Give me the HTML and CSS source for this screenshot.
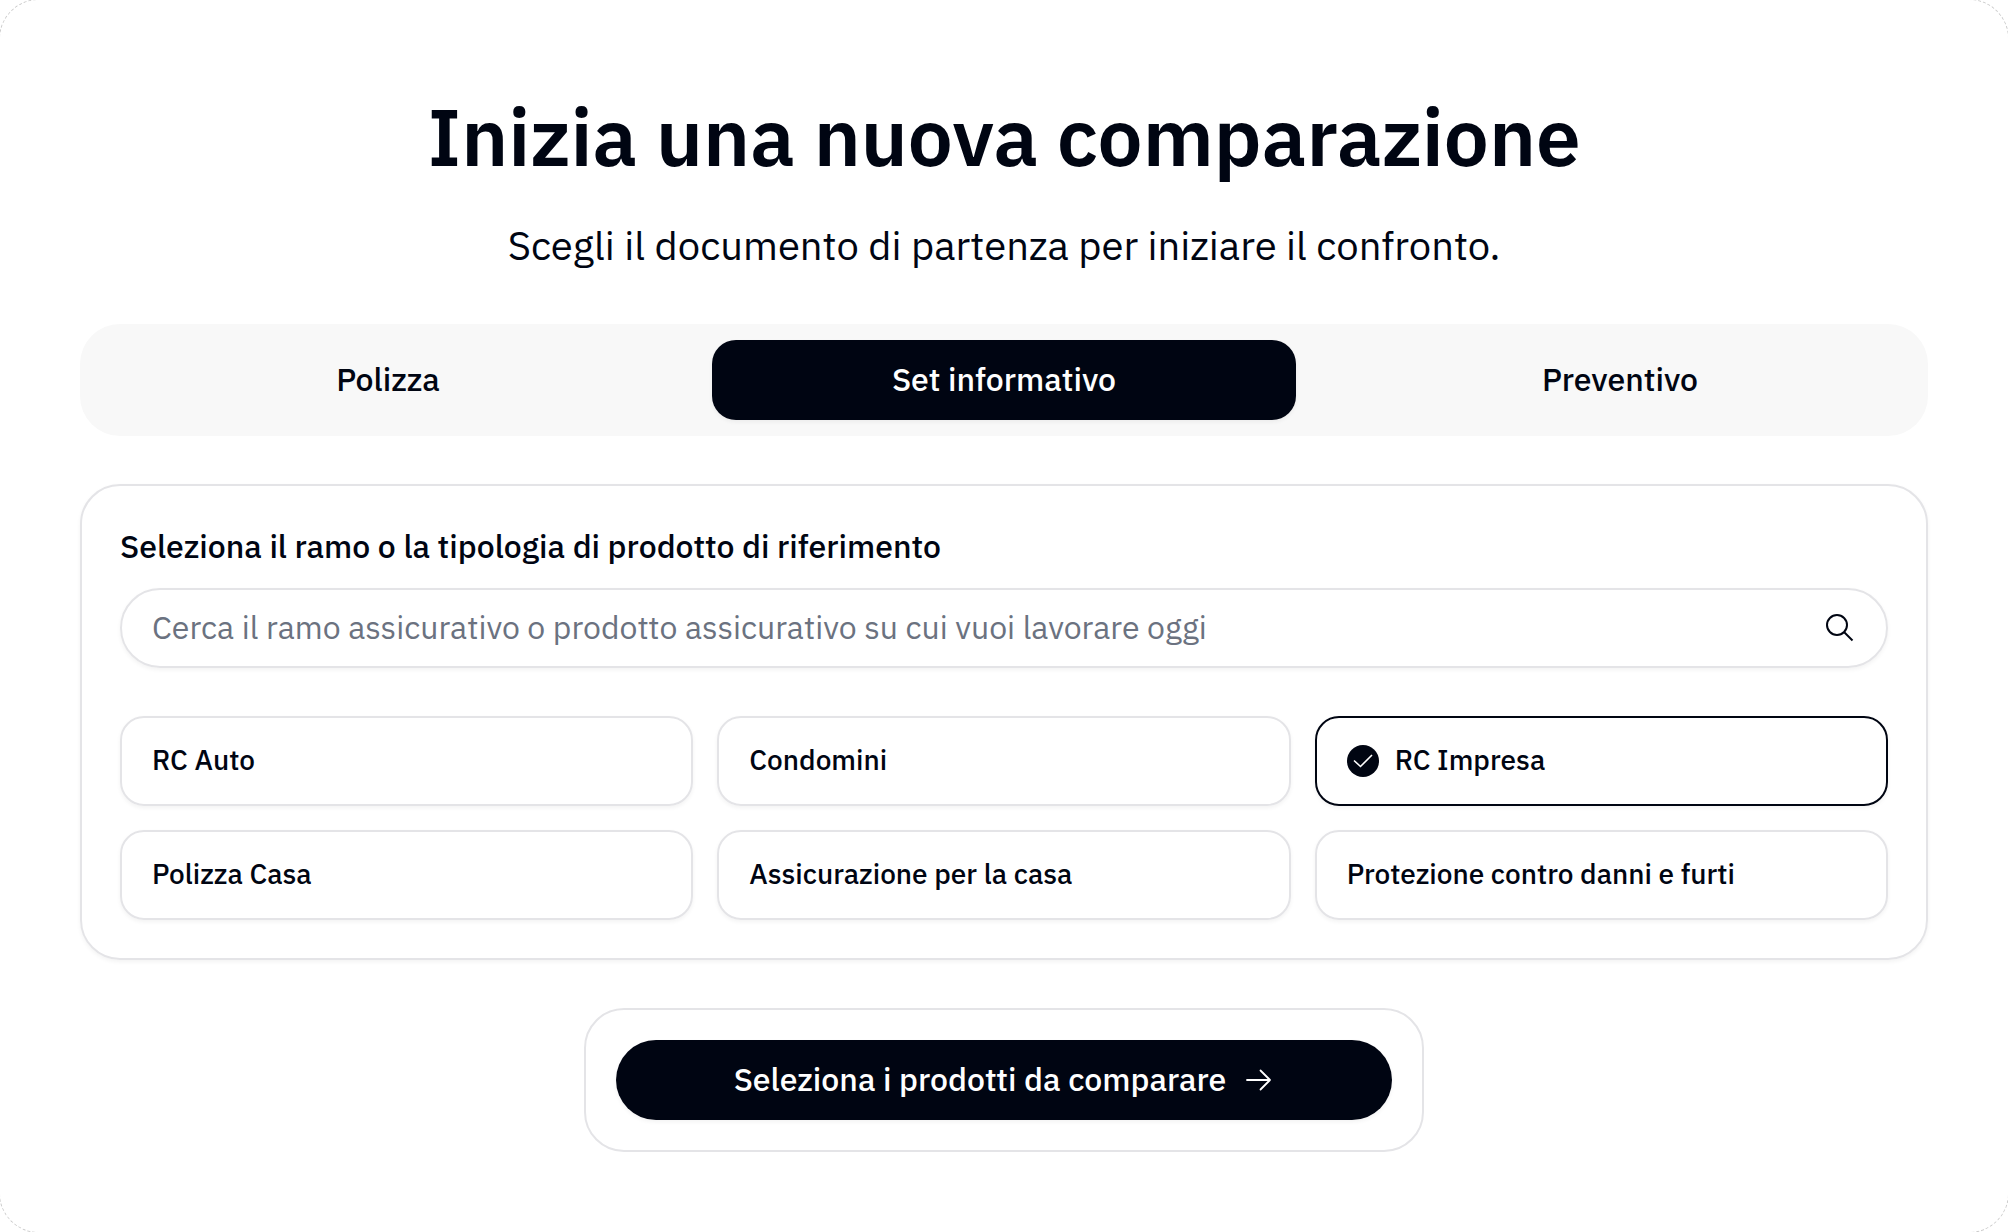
FILE: index.html
```
<!DOCTYPE html>
<html lang="it">
<head>
    <meta charset="utf-8">
    <meta name="viewport" content="width=device-width, initial-scale=1">
    <title>Inizia una nuova comparazione</title>
    <link rel="stylesheet" href="styles.css">
</head>
<body>
    <main class="page">
        <h1>Inizia una nuova comparazione</h1>
        <p class="subtitle">Scegli il documento di partenza per iniziare il confronto.</p>

        <div class="tabs" role="tablist">
            <button type="button" class="tab" role="tab" aria-selected="false">Polizza</button>
            <button type="button" class="tab active" role="tab" aria-selected="true">Set informativo</button>
            <button type="button" class="tab" role="tab" aria-selected="false">Preventivo</button>
        </div>

        <section class="card">
            <label for="search">Seleziona il ramo o la tipologia di prodotto di riferimento</label>
            <div class="search">
                <input type="text" id="search" name="search" autocomplete="off" placeholder="Cerca il ramo assicurativo o prodotto assicurativo su cui vuoi lavorare oggi">
                <button type="button" class="search-button" aria-label="Cerca">
                    <svg class="icon" viewBox="0 0 32 32" fill="none" stroke="currentColor" stroke-width="2">
                        <circle cx="13" cy="13" r="10"/>
                        <path d="M20 20l8.5 8.5"/>
                    </svg>
                </button>
            </div>

            <div class="options">
                <button type="button" class="option"><span>RC Auto</span></button>
                <button type="button" class="option"><span>Condomini</span></button>
                <button type="button" class="option selected" aria-pressed="true">
                    <svg class="icon" viewBox="0 0 32 32" fill="none">
                        <circle cx="16" cy="16" r="16" fill="currentColor"/>
                        <path d="M7 15.5l6.5 6L25 10" stroke="#fff" stroke-width="1.6"/>
                    </svg>
                    <span>RC Impresa</span>
                </button>
                <button type="button" class="option"><span>Polizza Casa</span></button>
                <button type="button" class="option"><span>Assicurazione per la casa</span></button>
                <button type="button" class="option"><span>Protezione contro danni e furti</span></button>
            </div>
        </section>

        <div class="action">
            <button type="button" class="submit">
                <span>Seleziona i prodotti da comparare</span>
                <svg class="icon" viewBox="0 0 32 32" fill="none" stroke="currentColor" stroke-width="1.8" stroke-linecap="round" stroke-linejoin="round">
                    <path d="M5 16h23M18.5 6.5L28 16l-9.5 9.5"/>
                </svg>
            </button>
        </div>
    </main>
</body>
</html>
```
FILE: styles.css
```
* {
    box-sizing: border-box;
}

body {
    margin: 0;
    background: #fff;
    color: #000512;
    font-family: "IBM Plex Sans", Roboto, sans-serif;
    overflow: hidden;
}

/* only the dashed corners stay inside the window */
.page {
    margin: -1px;
    min-height: calc(100vh + 2px);
    padding: 80px;
    border: 1px dashed #ccc;
    border-radius: 40px;
    display: flex;
    flex-direction: column;
    align-items: center;
}

h1 {
    margin: 0 0 24px;
    font-size: 80px;
    line-height: 112px;
    font-weight: 600;
    text-align: center;
}

.subtitle {
    margin: 0 0 50px;
    font-size: 40px;
    line-height: 58px;
    text-align: center;
}

button,
input {
    font-family: inherit;
    color: inherit;
}

button {
    padding: 0;
    border: none;
    background: none;
    cursor: pointer;
}

.icon {
    display: block;
    flex: none;
    width: 32px;
    height: 32px;
}

.tabs {
    width: 100%;
    display: grid;
    grid-template-columns: repeat(3, 1fr);
    gap: 32px;
    padding: 16px;
    margin-bottom: 48px;
    background: #f8f8f8;
    border-radius: 40px;
}

.tab {
    height: 80px;
    padding-bottom: 3px;
    border-radius: 24px;
    font-size: 32px;
    font-weight: 500;
}

.tab.active {
    background: #000512;
    color: #fff;
    box-shadow: 0 2px 4px rgba(0,0,0,0.05);
}

.card {
    width: 100%;
    padding: 38px;
    margin-bottom: 48px;
    border: 2px solid #e4e4e7;
    border-radius: 40px;
    box-shadow: 0 2px 4px rgba(0,0,0,0.05);
}

label {
    display: block;
    margin-bottom: 20px;
    font-size: 32px;
    line-height: 44px;
    font-weight: 500;
}

.search {
    display: flex;
    align-items: center;
    gap: 16px;
    height: 80px;
    padding: 0 30px;
    margin-bottom: 48px;
    border: 2px solid #e4e4e7;
    border-radius: 40px;
    box-shadow: 0 2px 4px rgba(0,0,0,0.05);
}

.search input {
    flex: 1;
    min-width: 0;
    padding: 0 0 3px;
    border: none;
    outline: none;
    background: none;
    font-size: 32px;
}

.search input::placeholder {
    color: #6b7280;
}

.options {
    display: grid;
    grid-template-columns: repeat(3, 1fr);
    gap: 24px;
}

.option {
    display: flex;
    align-items: center;
    gap: 16px;
    height: 90px;
    padding: 0 30px;
    border: 2px solid #e4e4e7;
    border-radius: 24px;
    box-shadow: 0 2px 4px rgba(0,0,0,0.05);
    font-size: 28px;
    font-weight: 500;
    text-align: left;
}

.option span,
.submit span {
    padding-bottom: 3px;
}

.option.selected {
    border-color: #000512;
}

.action {
    width: 100%;
    max-width: 840px;
    padding: 30px;
    border: 2px solid #e4e4e7;
    border-radius: 40px;
}

.submit {
    display: flex;
    align-items: center;
    justify-content: center;
    gap: 16px;
    width: 100%;
    height: 80px;
    border-radius: 40px;
    background: #000512;
    color: #fff;
    font-size: 32px;
    font-weight: 500;
    box-shadow: 0 2px 4px rgba(0,0,0,0.05);
}
```
